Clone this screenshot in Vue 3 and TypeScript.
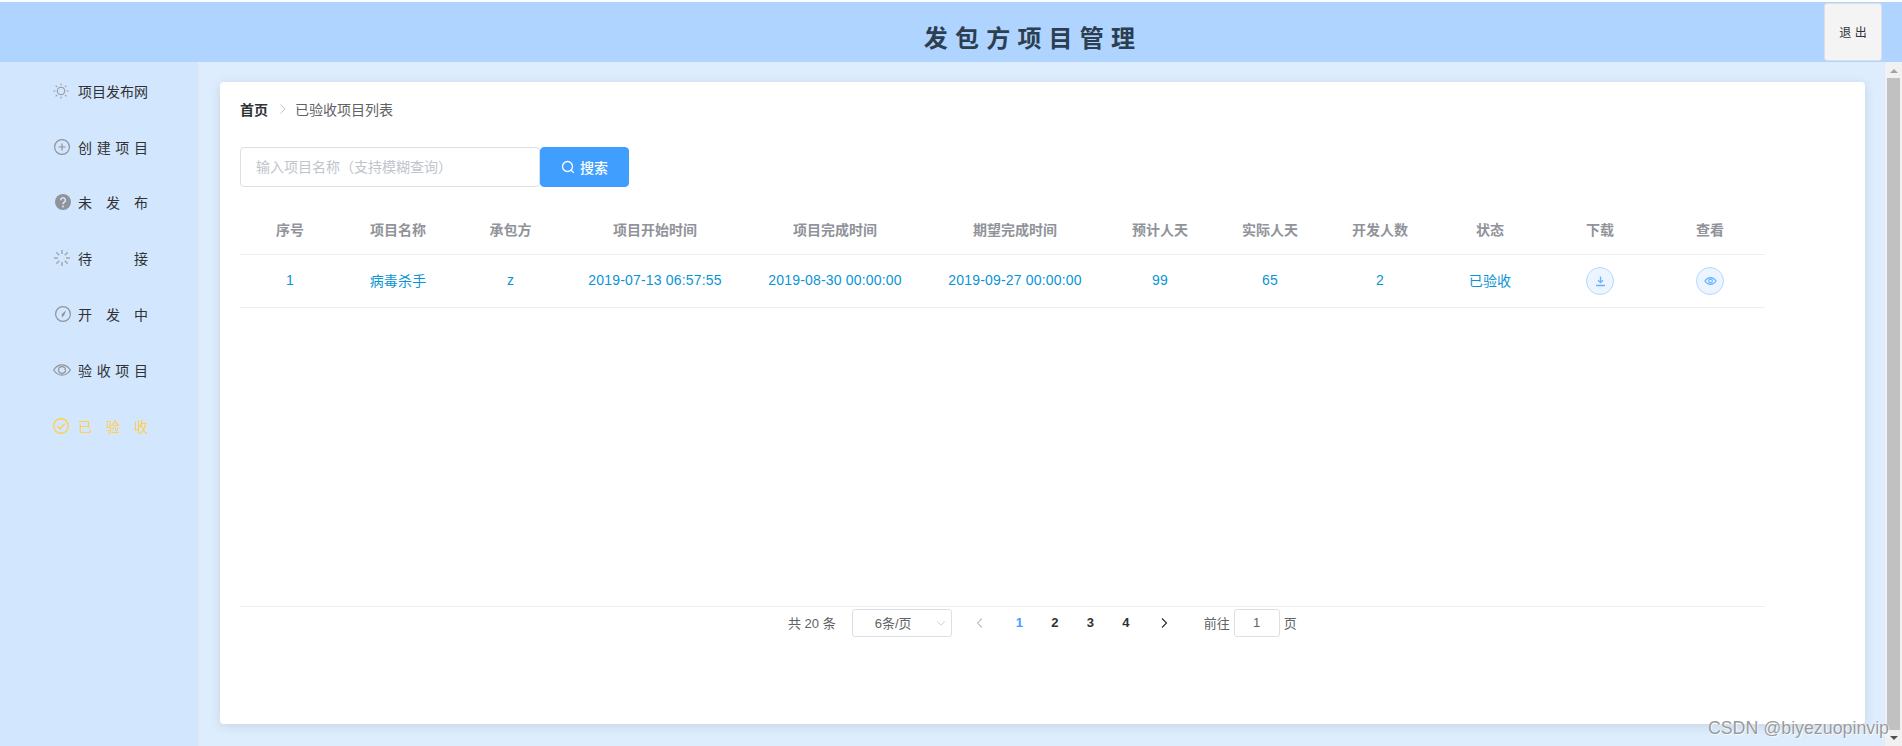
<script setup lang="ts">
const menu = [
  { label: '项目发布网', icon: 'sun' },
  { label: '创建项目', icon: 'plus' },
  { label: '未发布', icon: 'question' },
  { label: '待接', icon: 'loading' },
  { label: '开发中', icon: 'compass' },
  { label: '验收项目', icon: 'eye' },
  { label: '已验收', icon: 'check', active: true },
]
const heads = ['序号', '项目名称', '承包方', '项目开始时间', '项目完成时间', '期望完成时间', '预计人天', '实际人天', '开发人数', '状态', '下载', '查看']
const cells = ['1', '病毒杀手', 'z', '2019-07-13 06:57:55', '2019-08-30 00:00:00', '2019-09-27 00:00:00', '99', '65', '2', '已验收']
const rays = [0, 45, 90, 135, 180, 225, 270, 315]
</script>

<template>
  <div class="page">
    <header class="top">
      <h1 class="title">发包方项目管理</h1>
      <button class="logout">退 出</button>
    </header>
    <div class="body">
      <aside class="side">
        <div v-for="m in menu" :key="m.label" class="item" :class="{ active: m.active }">
          <svg class="ico" viewBox="0 0 18 18" fill="none" stroke="currentColor" stroke-width="1.2">
            <template v-if="m.icon === 'sun'">
              <circle cx="8" cy="9" r="3.8" stroke-width="1" />
              <line v-for="r in rays" :key="r" x1="8" y1="1.500" x2="8" y2="3.300" stroke-width="1" :transform="`rotate(${r} 8 9)`" />
            </template>
            <template v-else-if="m.icon === 'plus'">
              <circle cx="9" cy="9" r="7.400" />
              <path d="M9 5.500v7M5.500 9h7" />
            </template>
            <template v-else-if="m.icon === 'question'">
              <circle cx="10" cy="9" r="8" fill="currentColor" stroke="none" />
              <path d="M7.600 7.200a2.400 2.400 0 1 1 3.600 2.100c-.8.500-1.200.900-1.200 1.900" stroke="#d2e6fe" stroke-width="1.600" />
              <circle cx="10" cy="13.400" r="1" fill="#d2e6fe" stroke="none" />
            </template>
            <template v-else-if="m.icon === 'loading'">
              <line v-for="r in rays" :key="r" x1="9" y1="1" x2="9" y2="5" stroke-width="1.500" opacity="0.75" :transform="`rotate(${r} 9 9)`" />
            </template>
            <template v-else-if="m.icon === 'compass'">
              <circle cx="10" cy="9" r="7.400" />
              <path d="M13 5.200 11.300 10 9 12.600 8.700 9.200Z" fill="currentColor" stroke="none" />
            </template>
            <template v-else-if="m.icon === 'eye'">
              <path d="M.6 9C3 5.400 5.800 3.800 9 3.800s6 1.600 8.400 5.200c-2.400 3.600-5.200 5.200-8.400 5.200S3 12.600.6 9Z" />
              <circle cx="9" cy="9" r="3.400" />
            </template>
            <template v-else>
              <circle cx="8" cy="9" r="7.300" stroke-width="1.400" />
              <path d="M4.400 9.200 7 11.800l4.800-5" stroke-width="1.400" />
            </template>
          </svg>
          <span class="lbl">{{ m.label }}</span>
        </div>
      </aside>
      <main class="main">
        <section class="card">
          <nav class="crumb">
            <b>首页</b>
            <svg class="sep" viewBox="0 0 8 12" fill="none" stroke="#c0c4cc"><path d="M1.500 1.500 6 6l-4.500 4.500" /></svg>
            <span>已验收项目列表</span>
          </nav>
          <div class="search">
            <div class="input">输入项目名称（支持模糊查询）</div>
            <button class="btn">
              <svg viewBox="0 0 14 14" fill="none" stroke="#fff" stroke-width="1.300"><circle cx="6.500" cy="6.500" r="5" /><path d="m10.200 10.200 2.600 2.600" /></svg>
              搜索
            </button>
          </div>
          <div class="table">
            <div class="row thead">
              <div v-for="h in heads" :key="h" class="cell">{{ h }}</div>
            </div>
            <div class="row tbody">
              <div v-for="c in cells" :key="c" class="cell text">{{ c }}</div>
              <div class="cell">
                <span class="round">
                  <svg viewBox="0 0 12 12" fill="none" stroke="#66b1ff" stroke-width="1.300"><path d="M6 1.500v6M3.500 5.200 6 7.700l2.500-2.500M1.500 10.500h9" /></svg>
                </span>
              </div>
              <div class="cell">
                <span class="round">
                  <svg viewBox="0 0 14 12" fill="none" stroke="#66b1ff" stroke-width="1.300"><path d="M1 6c1.600-2.400 3.600-3.600 6-3.600S11.400 3.600 13 6c-1.600 2.400-3.600 3.600-6 3.600S2.600 8.400 1 6Z" /><circle cx="7" cy="6" r="2" /></svg>
                </span>
              </div>
            </div>
          </div>
          <div class="pager">
            <span class="txt">共 20 条</span>
            <div class="select">
              <span>6条/页</span>
              <svg viewBox="0 0 12 8" fill="none" stroke="#c0c4cc"><path d="M1.500 1.500 6 6l4.500-4.500" /></svg>
            </div>
            <svg class="arrow prev" viewBox="0 0 8 12" fill="none" stroke="#c0c4cc" stroke-width="1.200"><path d="M6 1.500 1.500 6 6 10.500" /></svg>
            <div class="pages txt">
              <span class="on">1</span><span>2</span><span>3</span><span>4</span>
            </div>
            <svg class="arrow next" viewBox="0 0 8 12" fill="none" stroke="#303133" stroke-width="1.200"><path d="M2 1.500 6.500 6 2 10.500" /></svg>
            <span class="goto txt">前往</span>
            <div class="jump">1</div>
            <span class="txt">页</span>
          </div>
        </section>
      </main>
      <div class="scrollbar">
        <span class="up"></span>
        <span class="thumb"></span>
        <span class="down"></span>
      </div>
    </div>
    <div class="mark">CSDN @biyezuopinvip</div>
  </div>
</template>

<style scoped>
.page {
  position: relative;
  height: 746px;
  padding-top: 2px;
  box-sizing: border-box;
  display: flex;
  flex-direction: column;
  overflow: hidden;
  font-family: "Liberation Sans", "Noto Sans CJK SC", sans-serif;
  background: #fff;
}
.top {
  height: 60px;
  flex: none;
  box-sizing: border-box;
  background: #aed4ff;
  display: flex;
  align-items: center;
  justify-content: center;
  padding: 9px 0 0 164px;
}
.title {
  margin: 0;
  font-size: 24px;
  font-weight: 700;
  letter-spacing: 7.200px;
  color: #2c3e50;
}
.logout {
  position: absolute;
  top: 3px;
  right: 20px;
  width: 58px;
  height: 58px;
  border: 1px solid #dcdfe6;
  border-radius: 3px;
  background: #f4f4f5;
  font: 12px "Liberation Sans", "Noto Sans CJK SC", sans-serif;
  color: #303133;
  padding: 0 0 2px;
}
.body {
  flex: 1;
  display: flex;
  min-height: 0;
}
.side {
  width: 199px;
  flex: none;
  background: #d2e6fe;
  border-right: 1px solid #e0e8f0;
  box-sizing: border-box;
  padding-top: 1px;
}
.item {
  height: 55.800px;
  display: flex;
  align-items: center;
  padding-left: 53px;
  color: #909399;
}
.item.active {
  color: #ffd04b;
}
.ico {
  width: 18px;
  height: 18px;
  flex: none;
}
.lbl {
  width: 70px;
  margin-left: 7px;
  font-size: 14px;
  color: #303133;
  text-align: justify;
  text-align-last: justify;
}
.active .lbl {
  color: #ffd04b;
}
.main {
  flex: 1;
  min-width: 0;
  background: #ddedfe;
  padding: 20px 20px 20px 21px;
  box-sizing: border-box;
}
.card {
  height: 642px;
  box-sizing: border-box;
  background: #fff;
  border-radius: 4px;
  box-shadow: 0 2px 12px rgba(0, 0, 0, 0.1);
  padding: 19px 100px 0 20px;
  display: flex;
  flex-direction: column;
}
.crumb {
  display: flex;
  align-items: center;
  height: 16px;
  font-size: 14px;
  color: #606266;
}
.crumb b {
  color: #303133;
}
.sep {
  width: 8px;
  height: 12px;
  margin: 0 8px 0 11px;
}
.search {
  display: flex;
  margin-top: 30px;
}
.input {
  width: 300px;
  height: 40px;
  box-sizing: border-box;
  border: 1px solid #dcdfe6;
  border-radius: 4px;
  background: #fff;
  padding-left: 15px;
  line-height: 38px;
  font-size: 14px;
  color: #c0c4cc;
}
.btn {
  width: 89px;
  height: 40px;
  border: 1px solid #409eff;
  border-radius: 4px;
  background: #409eff;
  color: #fff;
  font: 500 14px "Liberation Sans", "Noto Sans CJK SC", sans-serif;
  display: flex;
  align-items: center;
  justify-content: center;
  gap: 5px;
  padding: 0 0 1px;
}
.btn svg {
  width: 14px;
  height: 14px;
}
.table {
  margin-top: 13px;
  height: 406px;
  border-bottom: 1px solid #ebeef5;
}
.row {
  display: grid;
  grid-template-columns: 100px 116px 109px 180px 180px 180px 110px 110px 110px 110px 110px 110px;
  border-bottom: 1px solid #ebeef5;
  align-items: center;
  text-align: center;
}
.thead {
  height: 54px;
  font-size: 14px;
  font-weight: 700;
  color: #909399;
}
.thead .cell {
  padding-top: 4px;
}
.tbody {
  height: 52px;
  font-size: 14px;
  letter-spacing: 0.18px;
  color: #0a94d6;
}
.text {
  padding-bottom: 2px;
}
.round {
  width: 28px;
  height: 28px;
  box-sizing: border-box;
  border: 1px solid #b3d8ff;
  border-radius: 50%;
  background: #ecf5ff;
  display: inline-flex;
  align-items: center;
  justify-content: center;
  vertical-align: middle;
}
.round svg {
  width: 13px;
  height: 12px;
}
.pager {
  display: flex;
  align-items: center;
  margin-top: 2px;
  height: 28px;
  padding-left: 548px;
  font-size: 13px;
  color: #606266;
}
.txt {
  margin-bottom: 2px;
}
.select {
  width: 100px;
  height: 28px;
  box-sizing: border-box;
  border: 1px solid #dcdfe6;
  border-radius: 3px;
  margin-left: 16px;
  display: flex;
  align-items: center;
  padding: 0 0 2px 22px;
  position: relative;
}
.select svg {
  position: absolute;
  right: 5px;
  top: 10px;
  width: 10px;
  height: 7px;
}
.arrow {
  width: 8px;
  height: 12px;
}
.prev {
  margin-left: 24px;
}
.pages {
  display: flex;
  margin-left: 18px;
  font-weight: 700;
  color: #303133;
}
.pages span {
  width: 35.500px;
  text-align: center;
}
.pages .on {
  color: #409eff;
}
.next {
  margin-left: 16px;
}
.goto {
  margin-left: 36px;
}
.jump {
  width: 46px;
  height: 28px;
  box-sizing: border-box;
  border: 1px solid #dcdfe6;
  border-radius: 3px;
  margin: 0 4px 0 4px;
  text-align: center;
  line-height: 26px;
}
.scrollbar {
  width: 17px;
  flex: none;
  background: #f1f1f1;
  display: flex;
  flex-direction: column;
  align-items: center;
}
.up, .down {
  flex: none;
  width: 0;
  height: 0;
  border-left: 4px solid transparent;
  border-right: 4px solid transparent;
}
.up {
  border-bottom: 4px solid #a3a3a3;
  margin: 7px 0 5px;
}
.thumb {
  flex: 1;
  width: 13px;
  background: #c1c1c1;
}
.down {
  border-top: 4px solid #505050;
  margin: 6px 0 6px;
}
.mark {
  position: absolute;
  right: 13px;
  bottom: 7px;
  font-size: 17.800px;
  color: #9a9a9a;
  text-shadow: 0 0 1px #fff, 1px 1px 1px rgba(255, 255, 255, 0.8);
}
</style>
